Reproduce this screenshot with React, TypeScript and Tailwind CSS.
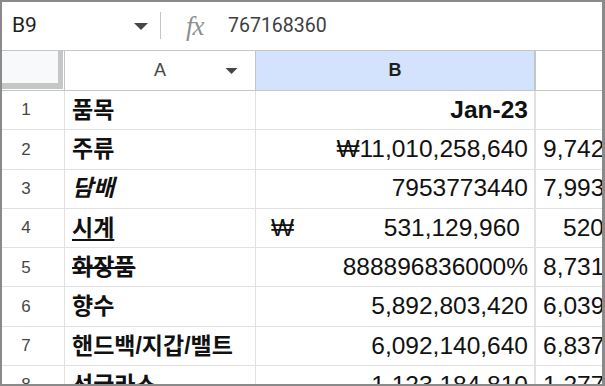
import React from 'react';

type Row = {
  n: number;
  a: string;
  aCls?: string;
  b: string;
  bBold?: boolean;
  won?: boolean;
  c: string;
  cPad?: string;
};

const rows: Row[] = [
  { n: 1, a: '품목', b: 'Jan-23', bBold: true, c: '' },
  { n: 2, a: '주류', b: '₩11,010,258,640', c: '9,742,806,480' },
  { n: 3, a: '담배', aCls: 'italic', b: '7953773440', c: '7,993,512,200' },
  { n: 4, a: '시계', aCls: 'underline underline-offset-[3px]', b: '531,129,960', won: true, c: '520,417,300', cPad: 'pl-[27px]' },
  { n: 5, a: '화장품', aCls: 'line-through', b: '888896836000%', c: '8,731,940,110' },
  { n: 6, a: '향수', b: '5,892,803,420', c: '6,039,214,580' },
  { n: 7, a: '핸드백/지갑/밸트', b: '6,092,140,640', c: '6,837,552,090' },
  { n: 8, a: '선글라스', b: '1,123,184,810', c: '1,277,630,450' },
];

const Caret = ({ w = 14, h = 7, color = '#444746' }: { w?: number; h?: number; color?: string }) => (
  <svg width={w} height={h} viewBox="0 0 14 7">
    <path d="M0 0 L14 0 L7 7 Z" fill={color} />
  </svg>
);

export default function App() {
  const font = { fontFamily: '"Liberation Sans", Arial, "Noto Sans CJK KR", sans-serif' };
  return (
    <div
      className="w-[605px] h-[386px] box-border border-2 border-r-[3px] border-[#8a8a8a] bg-white overflow-hidden text-[#1f1f1f]"
      style={font}
    >
      {/* formula bar */}
      <div className="h-[49px] flex items-center border-b border-[#c4c7c5] box-border">
        <div className="w-[158px] flex items-center pl-[10px] pr-[12px] justify-between">
          <span className="text-[21px] text-[#1f1f1f]" style={{ fontFamily: 'Roboto, sans-serif' }}>B9</span>
          <Caret />
        </div>
        <div className="w-px h-[27px] bg-[#c4c7c5] -mt-[2px]" />
        <span
          className="ml-[25px] w-[42px] text-[27px] leading-none italic text-[#8e918f] tracking-[-1px]"
          style={{ fontFamily: '"Liberation Serif", serif' }}
        >
          fx
        </span>
        <span className="text-[19.5px] text-[#3c4043]" style={{ fontFamily: 'Roboto, sans-serif' }}>
          767168360
        </span>
      </div>

      {/* column headers */}
      <div className="flex h-[40px] border-b border-[#c4c7c5] box-border">
        <div className="w-[63px] shrink-0 border-r border-[#c4c7c5] box-border">
          <div className="w-[61px] h-[38px] bg-[#f8f9fa] border-r-[5px] border-b-[6px] border-[#c4c7c5] box-border" />
        </div>
        <div className="w-[191px] shrink-0 relative flex items-center justify-center border-r border-[#c4c7c5] box-border text-[18px] text-[#444746]">
          A
          <div className="absolute left-[160px] top-[17px]">
            <Caret w={13} h={6} />
          </div>
        </div>
        <div className="w-[280px] shrink-0 flex items-center justify-center bg-[#d3e3fd] border-r-2 border-[#c4c7c5] box-border text-[18px] font-bold text-[#1f1f1f]">
          B
        </div>
        <div className="w-[280px] shrink-0" />
      </div>

      {/* rows */}
      {rows.map((r) => (
        <div key={r.n} className="flex h-[39.3px]">
          <div className="w-[63px] shrink-0 flex items-center justify-center pr-[14px] border-r border-b border-[#e1e1e1] box-border text-[17px] text-[#444746]">
            {r.n}
          </div>
          <div className="w-[191px] shrink-0 flex items-center pl-[7px] border-r border-b border-[#e1e1e1] box-border overflow-hidden">
            <span className={`text-[23px] font-bold whitespace-nowrap text-[#111] ${r.aCls ?? ''}`}>{r.a}</span>
          </div>
          <div className="w-[280px] shrink-0 flex items-center border-r-2 border-b border-[#e1e1e1] box-border text-[24.5px] text-[#111]">
            {r.won ? (
              <div className="flex w-full justify-between pl-[15px] pr-[14px]">
                <span>₩</span>
                <span>{r.b}</span>
              </div>
            ) : (
              <div className={`w-full text-right pr-[6px] ${r.bBold ? 'font-bold' : ''}`}>{r.b}</div>
            )}
          </div>
          <div className={`w-[280px] shrink-0 flex items-center border-b border-[#e1e1e1] box-border text-[24.5px] text-[#111] whitespace-nowrap ${r.cPad ?? 'pl-[7px]'}`}>
            {r.c}
          </div>
        </div>
      ))}
    </div>
  );
}
